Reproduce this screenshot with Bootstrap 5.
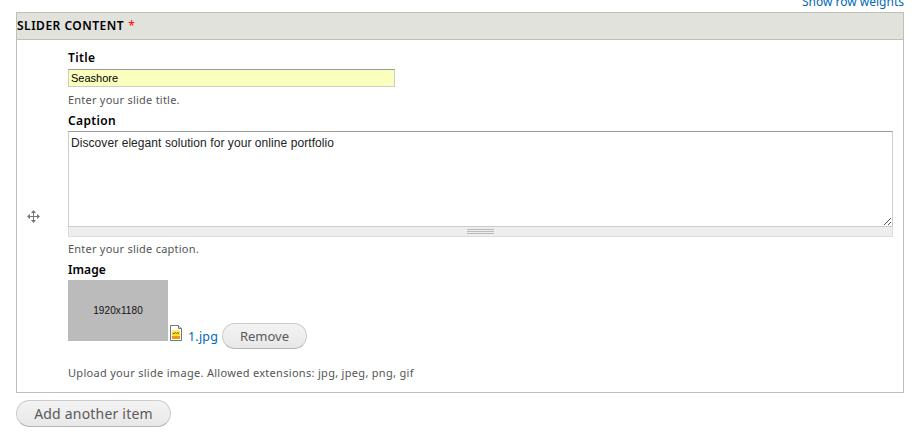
<!DOCTYPE html>
<html lang="en">
<head>
<meta charset="utf-8">
<meta name="viewport" content="width=device-width, initial-scale=1">
<title>Slider content</title>
<link href="https://cdn.jsdelivr.net/npm/bootstrap@5.3.0/dist/css/bootstrap.min.css" rel="stylesheet">
<style>
body{font-family:"Noto Sans","Open Sans",sans-serif;font-size:11px;line-height:16px;color:#000;background:#fff;height:433px;overflow:hidden}
.page{width:888px;margin-left:16px}
.weights{height:12px;font-size:12px}
.weights a{margin-top:-6px;line-height:16px;white-space:nowrap}
a{color:#0068b5;text-decoration:none}
.slides{border:1px solid #bebfb9;height:381px}
.slides-head{height:27px;background:#e1e2dc;border-bottom:1px solid #bebfb9;font-size:12px;line-height:26px;font-weight:600;letter-spacing:.5px}
.req{color:red;margin-left:4px;font-weight:400}
.handle{width:51px;padding-left:10px}
.fields{width:825px;padding-top:10px}
.fields label{font-size:12px;font-weight:600;line-height:16px;height:16px;letter-spacing:.35px}
.fields .image-label{letter-spacing:.05px}
.hint{color:#555;line-height:16px;height:16px;letter-spacing:.23px}
.form-control{border:1px solid #ccc;border-top-color:#999;font-family:"Liberation Sans",Arial,sans-serif;color:#000;border-radius:0}
.title-box{width:327px;height:18px;min-height:0;padding:0 2px;font-size:11px;line-height:16px;background:#faffbd;margin-top:3px;margin-bottom:5px}
.title-box:focus{background:#faffbd}
.caption-label{margin-top:5px}
.caption-box{height:96px;min-height:0!important;padding:3px 2px;font-size:12px;line-height:16px;resize:none;margin-top:2px;color:#222;letter-spacing:.07px}
.corner{position:absolute;right:1px;bottom:1px}
.grippie{height:10px;background:#eee;border:1px solid #ddd;border-top:0}
.grippie span{width:27px;height:5px;border-top:1px solid #bbb;border-bottom:1px solid #bbb;background:linear-gradient(#eee 1px,#bbb 1px,#bbb 2px,#eee 2px)}
.image-label{margin-top:5px}
.files{margin-top:2px}
.thumb{width:100px;height:61px;background:#bbb;font:10px "Liberation Sans",Arial,sans-serif;color:#111;letter-spacing:.1px}
.ficon{margin:45px 0 0 2px;flex:none}
.fname{font-size:12.5px;line-height:16px;margin:49px 0 0 6px;width:30px;letter-spacing:.2px}
.pill{border:1px solid #ccc;border-bottom-color:#b4b4b4;border-radius:14px;padding:0;background:linear-gradient(#f3f3f3,#e8e8e8);color:#5a5a5a;font-size:14px;line-height:24px;white-space:nowrap}
.pill:hover{background:#ddd}
.remove{width:85px;height:26px;margin:43px 0 0 4px;font-size:13px}
.add{width:155px;height:27px;margin-top:7px;letter-spacing:.2px}
.upload{margin-top:16px;letter-spacing:.3px}
</style>
<script src="https://cdn.jsdelivr.net/npm/bootstrap@5.3.0/dist/js/bootstrap.bundle.min.js"></script>
</head>
<body>
<main class="page">
  <div class="weights d-flex justify-content-end"><a href="#">Show row weights</a></div>
  <section class="slides d-flex flex-column">
    <div class="slides-head">SLIDER CONTENT<span class="req">*</span></div>
    <div class="d-flex flex-grow-1">
      <div class="handle d-flex align-items-center">
        <svg width="13" height="13" viewBox="0 0 13 13" fill="#777"><path d="M6 1h1v5h5v1H7v5H6V7H1V6h5z"/><path d="M6.5 0L9 3H4zM6.5 13L4 10h5zM0 6.5L3 4v5zM13 6.5L10 9V4z"/></svg>
      </div>
      <div class="fields d-flex flex-column">
        <label for="t">Title</label>
        <input id="t" class="form-control title-box" value="Seashore">
        <div class="hint">Enter your slide title.</div>
        <label for="c" class="caption-label">Caption</label>
        <div class="position-relative">
          <textarea id="c" class="form-control caption-box d-block">Discover elegant solution for your online portfolio</textarea>
          <svg class="corner" width="9" height="9" viewBox="0 0 9 9" stroke="#555" fill="none"><path d="M1 8L8 1M5 8l3-3"/></svg>
        </div>
        <div class="grippie d-flex justify-content-center align-items-center"><span></span></div>
        <div class="hint mt-1">Enter your slide caption.</div>
        <label class="image-label">Image</label>
        <div class="d-flex align-items-start files">
          <div class="thumb d-flex align-items-center justify-content-center">1920x1180</div>
          <svg class="ficon" width="12" height="16" viewBox="0 0 12 16"><path d="M.5.5h8l3 3v12H.5z" fill="#fff" stroke="#777"/><path d="M8.5.5v3h3" fill="#ddd" stroke="#777"/><path d="M2 5h8v9H2z" fill="#f8d526"/><path d="M2 11h8v3H2z" fill="#e79a16"/><path d="M2 5h8v2H2z" fill="#fdec6a"/><path d="M3 8.5h1.5l1-1 1 1 1-1 1.5 1" stroke="#7a5c12" fill="none"/><path d="M2 10.5h8" stroke="#ffe14d"/></svg>
          <a href="#" class="fname">1.jpg</a>
          <button class="btn pill remove">Remove</button>
        </div>
        <div class="hint upload">Upload your slide image. Allowed extensions: jpg, jpeg, png, gif</div>
      </div>
    </div>
  </section>
  <button class="btn pill add d-block">Add another item</button>
</main>
</body>
</html>
